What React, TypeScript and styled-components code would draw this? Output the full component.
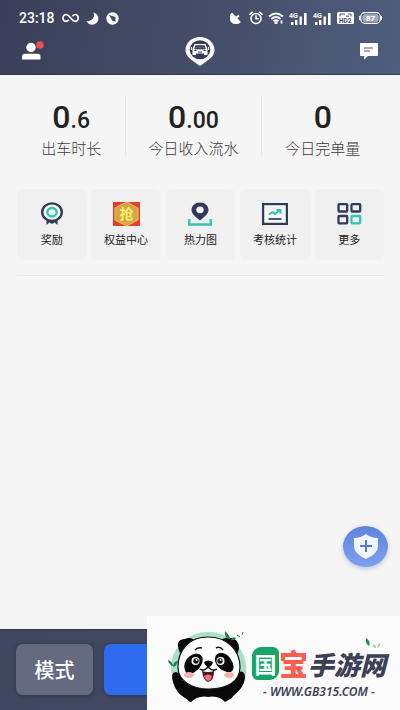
import React from "react";
import styled, { createGlobalStyle } from "styled-components";

const Global = createGlobalStyle`
  * { box-sizing: border-box; }
  body { margin: 0; background: #f5f5f5; font-family: Roboto, "Noto Sans CJK SC", sans-serif; color: #222; }
  button { border: 0; padding: 0; margin: 0; font: inherit; color: inherit; background: none; cursor: pointer; }
  svg { display: block; }
`;

const Page = styled.div`
  position: relative;
  min-height: 100vh;
  display: flex;
  flex-direction: column;
  overflow: hidden;
`;

const Header = styled.header`
  background: linear-gradient(100deg, #3a4058 0%, #434b66 45%, #4f5e7e 100%);
  border-bottom: 1px solid #343b54;
  color: #fff;
  height: 75px;
  padding-top: 8px;
`;

const StatusBar = styled.div`
  display: flex;
  align-items: center;
  justify-content: space-between;
  height: 20px;
  padding: 0 18px 0 19px;
`;

const StatusGroup = styled.div<{ $gap: number }>`
  display: flex;
  align-items: center;
  gap: ${(p) => p.$gap}px;
`;

const Clock = styled.time`
  font-size: 14px;
  line-height: 20px;
  font-weight: 500;
`;

const NavBar = styled.nav`
  display: grid;
  grid-template-columns: 1fr auto 1fr;
  align-items: center;
  height: 46px;
  padding: 0 22px;
`;

const NavButton = styled.button<{ $align?: string }>`
  justify-self: ${(p) => p.$align || "center"};
`;

const Main = styled.main`
  flex: 1;
  padding: 20px 16px 0 17px;
`;

const Stats = styled.section`
  display: grid;
  grid-template-columns: 108fr 135fr 123fr;
`;

const Stat = styled.div`
  height: 62px;
  padding-top: 6px;
  text-align: center;
  & + & { border-left: 1px solid #e6e6e6; }
`;

const StatValue = styled.div`
  height: 32px;
  font-size: 32px;
  line-height: 32px;
  font-weight: 500;
  color: #222;
  small { font-size: 23px; line-height: 1; }
`;

const StatLabel = styled.div`
  margin-top: 5px;
  font-size: 15px;
  line-height: 22px;
  color: #3c3c3c;
  font-weight: 300;
  white-space: nowrap;
`;

const Tiles = styled.section`
  display: grid;
  grid-template-columns: repeat(5, 1fr);
  gap: 5px;
  margin-top: 32px;
  padding-bottom: 15px;
  border-bottom: 1px solid #e8e8e8;
`;

const Tile = styled.button`
  display: flex;
  flex-direction: column;
  align-items: center;
  gap: 5px;
  height: 71px;
  padding-top: 12px;
  border-radius: 6px;
  background: #f0f0f0;
  font-size: 11px;
  line-height: 18px;
  white-space: nowrap;
`;

const Shield = styled.button`
  position: absolute;
  right: 12px;
  bottom: 143px;
  display: grid;
  place-items: center;
  width: 45px;
  height: 41px;
  border-radius: 50%;
  background: linear-gradient(#5c83dc, #7ea0f2);
  box-shadow: 0 2px 5px #c4cbdc;
`;

const ActionBar = styled.footer`
  display: flex;
  gap: 11px;
  height: 81px;
  padding: 14px 16px;
  border-top: 1px solid #333a50;
  background: linear-gradient(100deg, #3f465d, #434c66);
`;

const Action = styled.button<{ $primary?: boolean }>`
  flex: ${(p) => (p.$primary ? "1" : "0 0 77px")};
  height: 51px;
  border-radius: 7px;
  background: ${(p) => (p.$primary ? "#2f6bee" : "#646b80")};
  box-shadow: 0 1px 4px #30374b;
  color: #fff;
  font-size: 20px;
  font-weight: 500;
`;

const Watermark = styled.aside`
  position: absolute;
  right: 0;
  bottom: 0;
  display: flex;
  width: 253px;
  height: 94px;
  padding: 13px 0 0 21px;
  gap: 4px;
  background: #fbfbfb;
`;

const Brand = styled.div`
  display: flex;
  flex-direction: column;
  padding-top: 16px;
`;

const BrandName = styled.div`
  display: flex;
  align-items: center;
  height: 36px;
  color: #3b4055;
  font-family: "Noto Sans CJK SC", sans-serif;
  font-weight: 900;
  font-size: 26px;
  line-height: 36px;
  white-space: nowrap;
`;

const Seal = styled.span`
  display: grid;
  place-items: center;
  width: 27px;
  height: 33px;
  border-radius: 9px 6px;
  background: #18a465;
  color: #fff;
  font-size: 22px;
  line-height: 33px;
  font-weight: 700;
`;

const Accent = styled.span`
  color: #fb5e50;
  font-size: 29px;
`;

const Slanted = styled.span`
  padding-top: 2px;
  font-style: italic;
`;

const Site = styled.a`
  margin: 3px 0 0 11px;
  font-family: "Noto Sans", sans-serif;
  font-size: 12px;
  line-height: 16px;
  font-weight: 600;
  font-style: italic;
  color: #3b4055;
  text-decoration: none;
  white-space: nowrap;
`;

const Infinity8 = () => (
  <svg width="17" height="10" viewBox="0 0 17 10" fill="none" stroke="#fff" strokeWidth="1.7">
    <path d="M10.5 3.2C11.5 1.9 12.3 1.5 13.2 1.5a3 3.4 0 0 1 0 6.9C9.600 8.400 7.800 1.500 4 1.500a3 3.400 0 0 0 0 6.900c1.200 0 2-.7 2.800-1.600" />
  </svg>
);

const Moon = () => (
  <svg width="13" height="13" viewBox="0 0 13 13" fill="#fff">
    <path d="M7.500 .5A6.200 6.200 0 1 1 .5 9C5.500 10 9.500 5.500 7.500 .5Z" />
  </svg>
);

const Compass = () => (
  <svg width="13" height="13" viewBox="0 0 13 13">
    <circle cx="6.5" cy="6.5" r="6.2" fill="#fff" />
    <path d="M3 3 9.500 5 9.500 9.500 6.500 9Z" fill="#454c65" />
  </svg>
);

const Dish = () => (
  <svg width="14" height="12" viewBox="0 0 14 12" fill="#fff">
    <path d="M2 1.500 10 10A5.500 5.500 0 0 1 2 1.500Z" stroke="#fff" strokeWidth="1.200" strokeLinejoin="round" />
    <path d="M6 6 9 3.500" stroke="#fff" strokeWidth="1.800" />
  </svg>
);

const Alarm = () => (
  <svg width="14" height="14" viewBox="0 0 14 14" fill="none" stroke="#fff" strokeWidth="1.5" strokeLinecap="round">
    <circle cx="7" cy="7.5" r="5" />
    <path d="M7 4.800V7.800H9.200M1 3.200 3.400 1.200M13 3.200 10.600 1.200" />
  </svg>
);

const Wifi = () => (
  <svg width="16" height="12" viewBox="0 0 16 12" fill="none" stroke="#fff" strokeWidth="1.8">
    <path d="M1 4.500Q8-1.500 15 4.500M3.200 7Q8 2.900 12.800 7M5.500 9.300Q8 7.200 10.500 9.300" />
    <circle cx="8" cy="10.8" r=".7" fill="#fff" />
    <path d="M13.500 8.500V11.500" />
  </svg>
);

const Signal = () => (
  <svg width="19" height="13" viewBox="0 0 19 13" fill="#fff">
    <path d="M2 10h2.400v3H2zM6 8h2.400v5H6zM10.500 4.500h2.400v8.500h-2.400zM15 1h2.600v12H15z" />
    <text x="0" y="5.5" fontSize="7" fontWeight="700" fontFamily="Roboto">4G</text>
  </svg>
);

const HdVoice = () => (
  <svg width="17" height="12" viewBox="0 0 17 12">
    <rect width="17" height="12" rx="1.5" fill="#fff" />
    <path d="M3 4.500V2h5M11 2h3v2.500M9 4.200h3" fill="none" stroke="#4b5674" />
    <text x="2" y="10.5" fontSize="6.5" fontWeight="700" fontFamily="Roboto" fill="#4b5674">HD2</text>
  </svg>
);

const Battery = () => (
  <svg width="23" height="12" viewBox="0 0 23 12">
    <rect x="1.7" y=".7" width="19.6" height="10.6" rx="4" fill="none" stroke="#fff" strokeWidth="1.2" />
    <rect x="3.5" y="2.3" width="16" height="7.4" rx="2" fill="#a3acbf" />
    <path d="M.6 4v4M22.400 4v4" stroke="#fff" strokeWidth="1.1" />
    <text x="11.5" y="9" textAnchor="middle" fontSize="8" fontWeight="700" fontFamily="Roboto" fill="#fff">87</text>
  </svg>
);

const Person = () => (
  <svg width="22" height="20" viewBox="0 0 22 20" fill="#fff">
    <circle cx="9" cy="6.5" r="4.7" />
    <path d="M0 18.500V15.500Q0 12.800 3 12.800H15.500Q18.500 12.800 18.500 15.500V18.500Z" />
    <circle cx="18" cy="4" r="3.8" fill="#ef4f5b" />
  </svg>
);

const CarPin = () => (
  <svg width="30" height="31" viewBox="0 0 30 31">
    <path d="M15 1C7 1 .5 6.800 .5 14c0 7 7 10.500 14.500 16 7.500-5.500 14.500-9 14.500-16C29.500 6.800 23 1 15 1Z" fill="#fff" />
    <ellipse cx="15" cy="13.8" rx="10.3" ry="9.5" fill="#353c55" />
    <path d="M9.500 8h11l2 5v6h-3.500v-1.500h-8V19H7.500v-6Z" fill="#fff" />
    <path d="M10.800 9.700h8.400l1 3.200h-10.400ZM9.300 14.500h2.200M18.500 14.500h2.200M13 16h4" fill="#4b536d" stroke="#353c55" strokeWidth="1" />
    <path d="M6.500 11v3M23.500 11v3" stroke="#fff" />
  </svg>
);

const Chat = () => (
  <svg width="18" height="17" viewBox="0 0 18 17">
    <path d="M1 0H17Q18 0 18 1V12Q18 13 17 13H8L4 16.500V13H1Q0 13 0 12V1Q0 0 1 0Z" fill="#fff" />
    <path d="M4 5h9M4 8h6" stroke="#4d5875" strokeWidth="1.2" />
  </svg>
);

const Medal = () => (
  <svg width="24" height="26" viewBox="0 0 24 26" fill="none">
    <path d="M6.500 18V24L9.500 21.500 12 23 14.500 21.500 17.500 24V18Z" fill="#303b58" />
    <ellipse cx="12" cy="11.2" rx="9.8" ry="8.8" fill="#f5f5f5" stroke="#303b58" strokeWidth="2.4" />
    <ellipse cx="12" cy="11.2" rx="4.7" ry="4.2" stroke="#32c5b1" strokeWidth="2.3" />
  </svg>
);

const Rights = () => (
  <svg width="27" height="26" viewBox="0 0 27 26">
    <rect y="1" width="27" height="24" fill="#e63d2d" />
    <path d="M13.500 1 25 7V19L13.500 25 2 19V7Z" fill="#d7a642" stroke="#f3c65d" />
    <text x="13.5" y="18" textAnchor="middle" fontSize="14" fontWeight="700" fontFamily="Noto Sans CJK SC" fill="#ffed75">抢</text>
  </svg>
);

const HeatMap = () => (
  <svg width="24" height="26" viewBox="0 0 24 26">
    <path d="M12 1.500C7 1.500 3.500 4.800 3.500 9c0 4 4.500 7 8.500 10.500 4-3.500 8.500-6.500 8.500-10.500C20.500 4.800 17 1.500 12 1.500Z" fill="#303b58" />
    <ellipse cx="12" cy="8.8" rx="3.7" ry="3.4" fill="#f4f4f4" />
    <path d="M1.200 18V23.500H22.800V18" fill="none" stroke="#32c5b1" strokeWidth="2.4" />
  </svg>
);

const Chart = () => (
  <svg width="26" height="26" viewBox="0 0 26 26" fill="none">
    <rect x="1.1" y="3.1" width="23.8" height="19.8" fill="#f5f5f5" stroke="#303b58" strokeWidth="2.2" />
    <path d="M7 13.500 10.500 11 13 13 18 9M14.500 9H18.500V12.500" stroke="#32c5b1" strokeWidth="2" />
    <path d="M6.500 18h13" stroke="#303b58" strokeWidth="1.7" />
  </svg>
);

const More = () => (
  <svg width="25" height="26" viewBox="0 0 25 26" fill="none" stroke="#303b58" strokeWidth="2.3">
    <rect x="1.5" y="3.2" width="8.7" height="7.3" rx=".7" />
    <rect x="14.5" y="3.2" width="8.7" height="7.3" rx=".7" />
    <rect x="1.5" y="15" width="8.7" height="7.3" rx=".7" />
    <rect x="14.5" y="15" width="8.7" height="7.3" rx=".7" stroke="#32c5b1" />
  </svg>
);

const ShieldIcon = () => (
  <svg width="26" height="25" viewBox="0 0 26 25">
    <path d="M13 0Q18 4 25 4V12Q25 20 13 25 1 20 1 12V4Q8 4 13 0Z" fill="#f1f7ff" />
    <path d="M13 6V18M7 12H19" stroke="#5379d2" strokeWidth="2" />
  </svg>
);

const Panda = () => (
  <svg width="80" height="76" viewBox="0 0 80 76">
    <path d="M4 47C-1 24 16 3 40 3S81 22 78 46Q77 56 69 63L9 62Q5 56 4 47Z" fill="#a9dfc6" />
    <path d="M10 52H70L64 69 57 73H22L13 65Z" fill="#090909" />
    <path d="M5 53Q2 43 8 43 13 44 15 53L26 72 17 69Q8 64 5 53Z" fill="#090909" />
    <path d="M77 49Q77 41 71 43 68 34 61 41L60 52 55 72 64 68Q76 59 77 49Z" fill="#090909" />
    <path d="M12 24Q6 10 17 10 24 7 29 14ZM50 13Q59 5 68 11 74 18 68 27Z" fill="#090909" />
    <path d="M40 8C59 8 72 21 72 38 72 53 59 60 41 60 22 60 10 51 10 38 10 20 22 8 40 8Z" fill="#fff" stroke="#111" strokeWidth="1.2" />
    <path d="M17 41C14 32 23 23 31 25 38 28 34 38 28 42 22 47 18 46 17 41ZM47 29C48 22 58 23 62 29 68 37 66 45 59 43 51 41 46 34 47 29Z" fill="#090909" />
    <g fill="#fff">
      <circle cx="27.5" cy="32" r="4" />
      <circle cx="52.5" cy="32" r="4" />
    </g>
    <g fill="#111">
      <circle cx="28" cy="32" r="2.7" />
      <circle cx="52" cy="32" r="2.7" />
    </g>
    <g fill="#fff">
      <circle cx="28.5" cy="31" r="1" />
      <circle cx="52.5" cy="31" r="1" />
    </g>
    <path d="M36 33Q40 30 45 33 44 38 40 38 37 37 36 33Z" fill="#090909" />
    <path d="M32 40Q36 43 40 38 45 43 49 40M27 21Q30 18 34 19M48 19Q52 17 55 21" fill="none" stroke="#111" strokeWidth="1.5" />
    <path d="M34 42Q40 44 46 42 46 52 40 53 35 51 34 42Z" fill="#49171d" />
    <path d="M36 47Q40 44 44 47 43 52 40 52 37 51 36 47Z" fill="#fb6b7a" />
    <ellipse cx="21" cy="46" rx="5" ry="3" fill="#fbb1aa" />
    <ellipse cx="61" cy="46" rx="5" ry="3" fill="#fbb1aa" />
    <path d="M22 74Q30 66 40 68 51 66 58 74Z" fill="#fff" />
    <path d="M4 37Q0 34 0 31 5 33 5 37ZM5 37Q6 32 10 32 9 37 5 38ZM60 10Q56 7 57 2 61 5 62 10ZM63 11Q64 7 68 9 67 12 63 11Z" fill="#168450" />
    <path d="M69 6 72 8M74 6 75 3" stroke="#287a57" />
  </svg>
);

const Leaves = styled.svg`
  position: absolute;
  right: 18px;
  top: 21px;
`;

const stats = [
  { whole: "0", part: ".6", label: "出车时长" },
  { whole: "0", part: ".00", label: "今日收入流水" },
  { whole: "0", part: "", label: "今日完单量" },
];

const tiles = [
  { icon: <Medal />, label: "奖励" },
  { icon: <Rights />, label: "权益中心" },
  { icon: <HeatMap />, label: "热力图" },
  { icon: <Chart />, label: "考核统计" },
  { icon: <More />, label: "更多" },
];

export default function App() {
  return (
    <Page>
      <Global />
      <Header>
        <StatusBar>
          <StatusGroup $gap={7}>
            <Clock>23:18</Clock>
            <Infinity8 />
            <Moon />
            <Compass />
          </StatusGroup>
          <StatusGroup $gap={5}>
            <Dish />
            <Alarm />
            <Wifi />
            <Signal />
            <Signal />
            <HdVoice />
            <Battery />
          </StatusGroup>
        </StatusBar>
        <NavBar>
          <NavButton $align="start" aria-label="个人中心"><Person /></NavButton>
          <NavButton aria-label="车辆"><CarPin /></NavButton>
          <NavButton $align="end" aria-label="消息"><Chat /></NavButton>
        </NavBar>
      </Header>
      <Main>
        <Stats>
          {stats.map((s) => (
            <Stat key={s.label}>
              <StatValue>{s.whole}{s.part && <small>{s.part}</small>}</StatValue>
              <StatLabel>{s.label}</StatLabel>
            </Stat>
          ))}
        </Stats>
        <Tiles>
          {tiles.map((t) => (
            <Tile key={t.label}>{t.icon}{t.label}</Tile>
          ))}
        </Tiles>
      </Main>
      <Shield aria-label="安全中心"><ShieldIcon /></Shield>
      <ActionBar>
        <Action>模式</Action>
        <Action $primary aria-label="出车" />
      </ActionBar>
      <Watermark>
        <Panda />
        <Brand>
          <BrandName>
            <Seal>国</Seal>
            <Accent>宝</Accent>
            <Slanted>手游网</Slanted>
          </BrandName>
          <Site href="#">- WWW.GB315.COM -</Site>
        </Brand>
        <Leaves width="18" height="14" viewBox="0 0 18 14">
          <path d="M2 1Q7 4 5 9 1 6 2 1Z" fill="#168f58" />
          <path d="M9 8Q12 7 12 11 9 11 9 8ZM16 6Q17 9 13 11 13 8 16 6Z" fill="#a3c4b4" />
        </Leaves>
      </Watermark>
    </Page>
  );
}
